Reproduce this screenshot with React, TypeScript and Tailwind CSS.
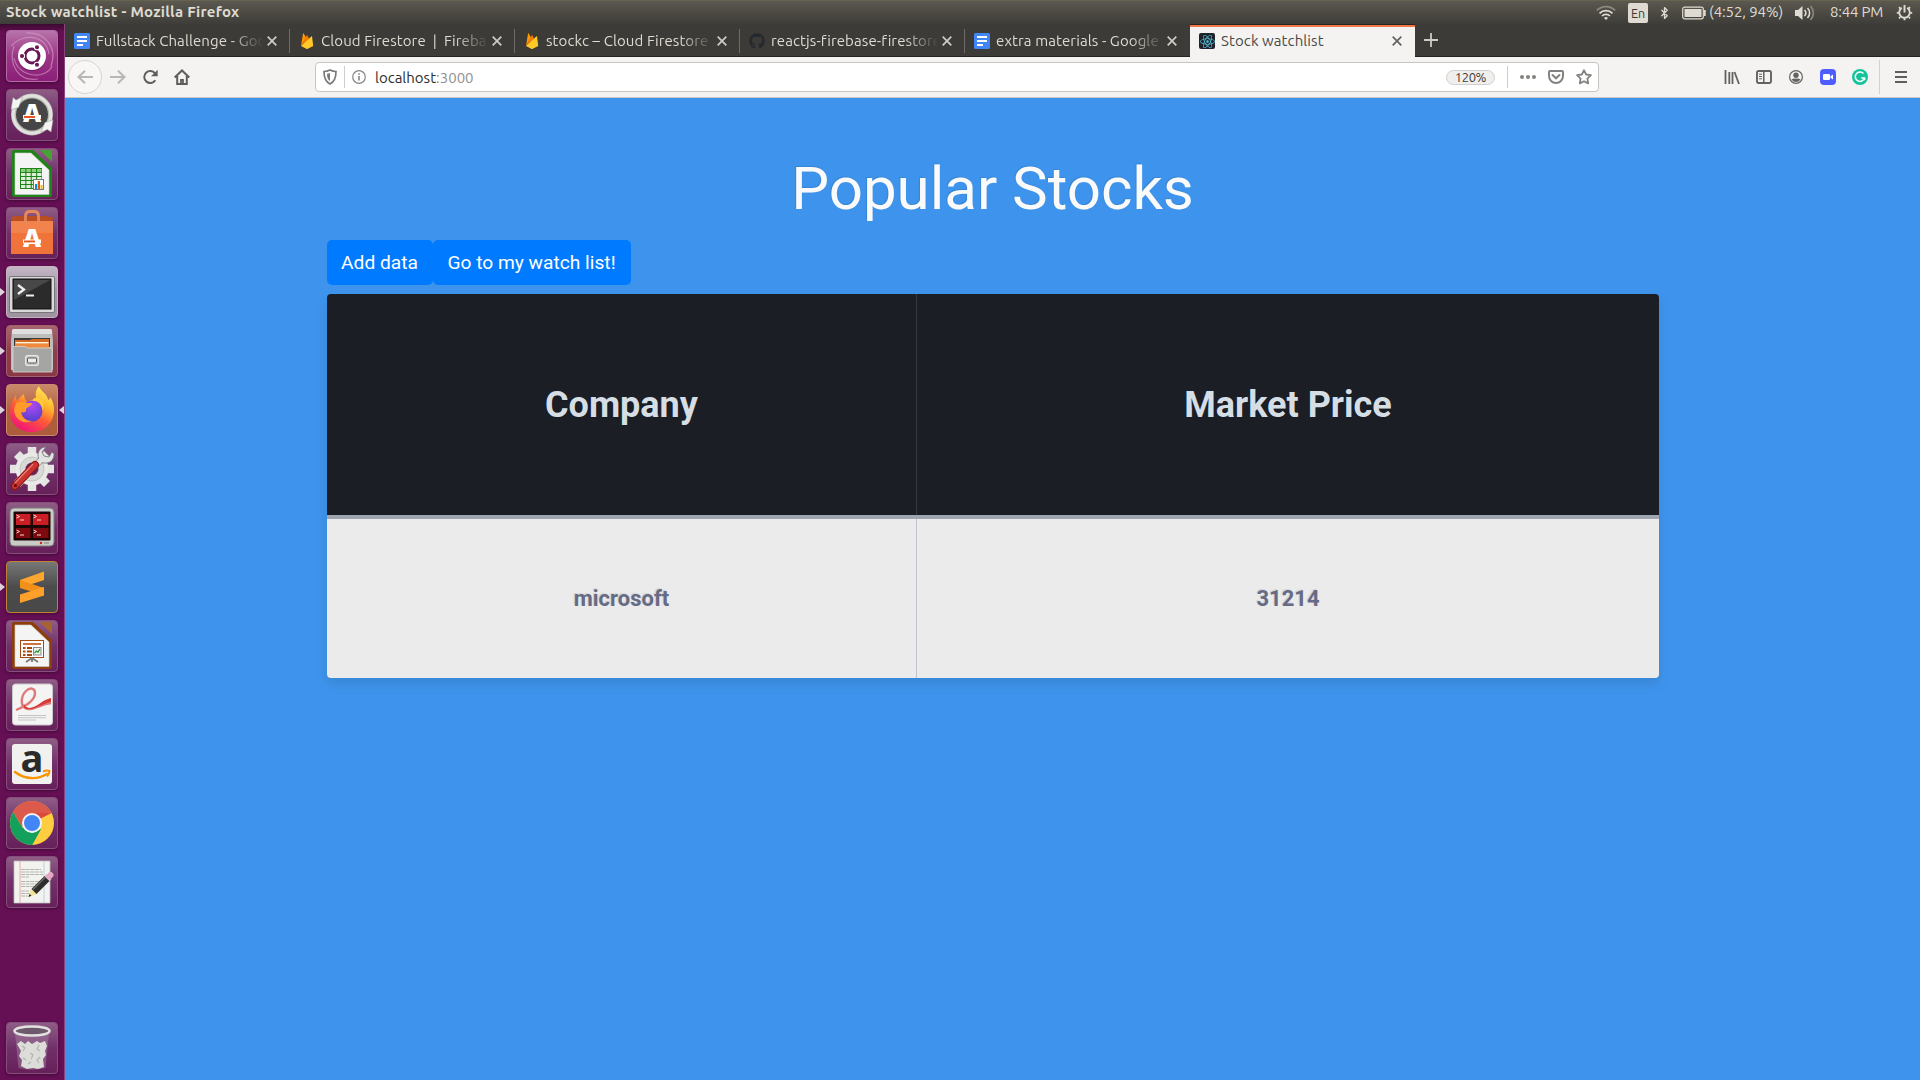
import React from "react";
import { FaGithub, FaReact } from "react-icons/fa";
import { Bluetooth } from "lucide-react";

const UI = "font-['Ubuntu','Noto_Sans',sans-serif]";

/* ---------- small glyphs ---------- */

function DocsIcon() {
  return (
    <svg width="16" height="16" viewBox="0 0 16 16">
      <rect width="16" height="16" rx="1.5" fill="#4285f4" />
      <path d="M3 4h10M3 8h10M3 12h6" stroke="#fff" strokeWidth="1.900" />
    </svg>
  );
}

function FirebaseIcon() {
  return (
    <svg width="16" height="16" viewBox="0 0 16 16">
      <path d="M2 13 4 .7c.1-.4.5-.5.7-.1L7 4.500 2 13Z" fill="#ff9800" />
      <path d="M2 13 7.700 2.600c.2-.4.6-.4.8 0L10 6 2 13Z" fill="#f57c00" />
      <path d="m2 13 10.300-9.500c.3-.3.7-.1.8.3L14.200 13 8.800 15.800c-.5.3-1 .3-1.500 0L2 13Z" fill="#ffca28" />
    </svg>
  );
}

function ReactTabIcon() {
  return (
    <span className="flex size-4 items-center justify-center rounded-[2px] bg-[#20232a] text-[#53c1de]">
      <FaReact size={15} />
    </span>
  );
}

function Close() {
  return (
    <svg width="10" height="10" viewBox="0 0 10 10" className="shrink-0">
      <path d="M.7.7 9.300 9.300M9.300.7.7 9.300" stroke="currentColor" strokeWidth="1.7" />
    </svg>
  );
}

/* ---------- top panel ---------- */

function TopPanel() {
  return (
    <header className="flex h-6 shrink-0 items-center border-t border-[#66644f] bg-linear-to-b from-[#5b584f] to-[#3e3d39] text-[#dfdbd2]">
      <span className="-mt-[2px] ml-[6px] text-[15px] leading-[22px] font-bold tracking-[0.27px] whitespace-nowrap">
        Stock watchlist - Mozilla Firefox
      </span>
      <div className="ml-auto flex h-[22px] items-center text-[15px] leading-[22px] whitespace-nowrap">
        <svg width="20" height="16" viewBox="0 0 20 16" fill="none" strokeWidth="1.700" className="mr-[12px]">
          <path d="M.8 5.500a13 13 0 0 1 18.400 0" stroke="#8b887f" />
          <path d="M3.500 8.300a9.200 9.200 0 0 1 13 0" stroke="#dfdbd2" />
          <path d="M6 11a5.700 5.700 0 0 1 8 0" stroke="#dfdbd2" />
          <path d="m8 12.900 2 2 2-2a3 3 0 0 0-4 0Z" fill="#dfdbd2" />
        </svg>
        <span className="mr-[10px] flex h-5 w-5 items-center justify-center rounded-[2px] bg-[#dfdbd2] text-[12.500px] text-[#3c3a35]">
          En
        </span>
        <Bluetooth width={13} height={18} strokeWidth={2.400} className="mr-[11px]" />
        <svg width="24" height="14" viewBox="0 0 24 14" className="mr-[3px]">
          <rect x=".7" y="1.200" width="20.600" height="11.600" rx="2" fill="none" stroke="#dfdbd2" strokeWidth="1.200" />
          <rect x="2.500" y="3" width="17" height="8" fill="#dfdbd2" />
          <path d="M22.800 4v6" stroke="#dfdbd2" strokeWidth="1.800" />
        </svg>
        <span className="-mt-[2px] w-[86px] tracking-[-0.1px]">(4:52, 94%)</span>
        <svg width="20" height="18" viewBox="0 0 20 18" fill="none" strokeWidth="1.600" className="mr-[15px]">
          <path d="M0 6h3l4.500-4v14L3 12H0Z" fill="#dfdbd2" />
          <path d="M9.500 6a4 4 0 0 1 0 6" stroke="#dfdbd2" />
          <path d="M12.500 4a7 7 0 0 1 0 10" stroke="#dfdbd2" />
          <path d="M15.500 2a10 10 0 0 1 0 14" stroke="#8b887f" />
        </svg>
        <span className="-mt-[2px] w-[66px] tracking-[-0.2px]">8:44 PM</span>
        <svg width="17" height="17" viewBox="0 0 17 17" fill="none" stroke="#dfdbd2" className="mr-[7px]">
          <path d="M5.800 3.900a5.300 5.300 0 1 0 5.400 0" strokeWidth="1.900" />
          <path d="M8.500 1v7.500" strokeWidth="1.900" />
          <path d="M.8 8.900h1.800M14.400 8.900h1.800M3 14.300l1.200-1.200M14 14.300l-1.200-1.200M8.500 14.300v2M3 3.200l1.200 1.200M14 3.200l-1.200 1.200" strokeWidth="1.900" />
        </svg>
      </div>
    </header>
  );
}

/* ---------- launcher ---------- */

type Tile = { name: string; bg: string; running?: boolean; active?: boolean; art: React.ReactNode };

const plain = "bg-linear-to-b from-[#8f5d86] via-[#70306a] to-[#672059] border-[#84507b]";

const Ubuntu = (
  <>
    <path d="M5 16C16 3 40 4 43 24M46 36C40 50 12 48 8 28M20 3C38 2 52 16 45 36M32 49C12 52 2 34 8 16" stroke="#d9a3cc" strokeWidth="1.200" fill="none" opacity=".6" />
    <circle cx="26" cy="27" r="14" fill="#5a0f47" opacity=".5" />
    <circle cx="26" cy="26" r="14" fill="#fff" />
    <circle cx="26" cy="26" r="7" fill="none" stroke="#6a1556" strokeWidth="3" />
    <g fill="#6a1556" stroke="#fff" strokeWidth="1.100">
      <circle cx="16" cy="26" r="2.600" />
      <circle cx="31" cy="17.200" r="2.600" />
      <circle cx="31" cy="34.800" r="2.600" />
    </g>
  </>
);

const Updater = (
  <>
    <circle cx="26" cy="25.500" r="18.500" fill="#464646" stroke="#b9b9b4" strokeWidth="5" />
    <circle cx="26" cy="25.500" r="18.800" fill="none" stroke="#e2e2de" strokeWidth="3" />
    <path d="M5 20.500 7 8.500l3 2.500 6.500-3-4 10.500Z" fill="#f4f4f2" stroke="#9b9b97" strokeWidth=".5" />
    <path d="m47 31-2 12-3.500-2.500L35 43l4-9.500Z" fill="#f4f4f2" stroke="#9b9b97" strokeWidth=".5" />
    <text x="26" y="33" textAnchor="middle" fontSize="25" fontWeight="800" fill="#fff" fontFamily="Open Sans, sans-serif">A</text>
    <path d="M17 26h18v3.800H17z" fill="#fff" />
    <path d="M18 27h11v2H18z" fill="#e95420" />
  </>
);

const Calc = (
  <>
    <path d="M8 2h19l19 18v27a2 2 0 0 1-2 2H8a2 2 0 0 1-2-2V4a2 2 0 0 1 2-2Z" fill="#1f8417" />
    <path d="M9 5h16l18 17v24.500H9Z" fill="#f4f4f4" stroke="#cfcfcf" strokeWidth=".6" />
    <path d="M34 2h10a2 2 0 0 1 2 2v10Z" fill="#43a52f" />
    <path d="M14 20h22v21H14Z" fill="#1f8417" />
    <g>
      {[21, 25, 29, 33, 37].map((y) =>
        [15, 20.4, 25.8, 31.2].map((x) => <rect key={`${x}-${y}`} x={x} y={y} width="4.300" height="3" fill={y === 21 ? "#8ccf7c" : "#dff0da"} />),
      )}
    </g>
    <rect x="27.500" y="31.500" width="10" height="10" fill="#fff" stroke="#777" />
    <path d="M29 36h2.200v5H29z" fill="#0f8fd0" />
    <path d="M31.800 33h2.200v8h-2.200z" fill="#e05d12" />
    <path d="M34.600 37h2v4h-2z" fill="#f1b713" />
  </>
);

const Software = (
  <>
    <path d="M6 14h40l1-4-4 0-2-1H10L5 10Z" fill="#b84f22" />
    <path d="M5 14h42v33H5Z" fill="#f0733a" />
    <path d="M5 14h42v12H5Z" fill="#f58d58" opacity=".6" />
    <path d="M19.500 17V9q0-4.500 4.500-4.500h4Q32.500 4.500 32.500 9v8" fill="none" stroke="#e8875c" strokeWidth="2.800" />
    <text x="26" y="40" textAnchor="middle" fontSize="25" fontWeight="800" fill="#fff" fontFamily="Open Sans, sans-serif">A</text>
    <path d="M17 32.500h18v3.800H17z" fill="#fff" />
    <path d="M18 33.500h11v1.900H18z" fill="#e95420" />
  </>
);

const Terminal = (
  <>
    <rect x="3.500" y="10.500" width="45" height="36" rx="1.500" fill="#d9d9d9" stroke="#777" />
    <rect x="7" y="13" width="38" height="30" fill="#2b2b2b" stroke="#111" />
    <path d="M8 14h36L8 34Z" fill="#484848" />
    <path d="m12 19 6 4.500-6 4.500" stroke="#eee" strokeWidth="2.300" fill="none" />
    <path d="M20 29.500h8" stroke="#eee" strokeWidth="2" />
  </>
);

const Files = (
  <>
    <path d="M6 5.500Q6 4 8 4h36q2 0 2 1.500L47 16v29H5V16Z" fill="#bdbdbd" />
    <path d="M6 5.500Q6 4 8 4h36q2 0 2 1.500V9H6Z" fill="#dfdfdf" />
    <path d="M8 13h36v9H8Z" fill="#3c3b37" />
    <path d="M9 15h15l2-1h17v8H9Z" fill="#d36a23" />
    <path d="M9.500 17h33v1.500h-33Z" fill="#fff3d8" />
    <path d="M9 19h34v4H9Z" fill="#ef8a3c" />
    <path d="M7 21.500h12l2 1.500h25v24H7Z" fill="#a5a5a3" stroke="#d6d6d6" strokeWidth=".8" />
    <rect x="19.500" y="30.500" width="13" height="10" rx="1.500" fill="#c8c8c8" stroke="#e8e8e8" />
    <rect x="21.500" y="33" width="9" height="5" rx="1" fill="#eee" stroke="#555" />
  </>
);

const Firefox = (
  <>
    <defs>
      <linearGradient id="ffBody" x1=".85" y1="0" x2=".3" y2="1">
        <stop offset="0" stopColor="#fff36a" />
        <stop offset=".35" stopColor="#ffb52c" />
        <stop offset=".62" stopColor="#ff5a36" />
        <stop offset="1" stopColor="#f0127d" />
      </linearGradient>
      <radialGradient id="ffGlobe" cx=".5" cy=".25" r=".8">
        <stop offset="0" stopColor="#b14af0" />
        <stop offset="1" stopColor="#4f3fd0" />
      </radialGradient>
    </defs>
    <path d="M33 2c1 4 5 6 7 9 1 2 2 3 2 5 1 0 2-1 2-3 3 4 4 8 4 13 0 13-10 22-22 22S4 40 4 28c0-7 3-12 6-17 0 2 0 4 1 6 2-3 4-5 7-7 0 3 1 6 3 8 3-2 7-2 9-4-1-5 0-9 3-12Z" fill="url(#ffBody)" />
    <circle cx="26" cy="27" r="10.500" fill="url(#ffGlobe)" />
    <path d="M10 19c4-2 8-1 11 0h5c0 3-5 4-6 6 1 3-2 4-5 3 1 6 5 9 11 9-10 4-18-3-18-12Z" fill="#ff9a2b" />
    <path d="M27 17c6-1 10 4 9 10 3-6 1-12-4-13-3-1-6 1-5 3Z" fill="#ffcb38" />
  </>
);

const Settings = (
  <>
    <g stroke="#e4e4e2" strokeWidth="8.500">
      <path d="M26 4v44M4 26h44M11 11l30 30M41 11 11 41" />
    </g>
    <circle cx="26" cy="26" r="16.500" fill="#e9e9e7" />
    <circle cx="26" cy="26" r="12" fill="#d9d9d6" stroke="#c4c4c2" />
    <circle cx="26" cy="26" r="6.500" fill="#6a2a60" />
    <path d="m28 24 9-9" stroke="#999c99" strokeWidth="6.500" />
    <path d="M40 4c-5 0-8 4-8 8 0 5 4 9 8 8 5 0 8-4 8-9l-2-2-3 5-5-1-2-4Z" fill="#e2e5e2" stroke="#7c7c7c" strokeWidth=".9" />
    <path d="m28 24 8-8" stroke="#e2e5e2" strokeWidth="4.600" />
    <path d="M9 43 29 22" stroke="#8d1310" strokeWidth="8" strokeLinecap="round" />
    <path d="M9 43 29 22" stroke="#c93430" strokeWidth="6" strokeLinecap="round" />
    <path d="M9 40 27 21" stroke="#ec7d76" strokeWidth="1.300" />
    <circle cx="9.500" cy="42.500" r="1.500" fill="#5c0c0a" />
  </>
);

const Terminator = (
  <>
    <rect x="4" y="6" width="44" height="38" rx="4" fill="#c9cbc6" stroke="#7d7d79" />
    <rect x="7.500" y="9.500" width="37" height="29" rx="1" fill="#1c0505" />
    <path d="M10 12h14.500v11H10zM27 12h15.500v11H27z" fill="#c81e24" />
    <path d="M10 26h14.500v10H10zM27 26h15.500v10H27z" fill="#7e0a0e" />
    <g stroke="#f6d0d0" strokeWidth="1" fill="none">
      <path d="m10.500 13 3 1.500-3 1.500M14 18h4M27.500 13l3 1.500-3 1.500M31 18h4M10.500 28l3 1.500-3 1.500M14 33h4M27.500 28l3 1.500-3 1.500M31 33h4" />
    </g>
    <circle cx="35" cy="41" r="1.200" fill="#d2221c" />
    <path d="M38 41h5" stroke="#a4a4a0" strokeWidth="2" />
  </>
);

const Sublime = (
  <>
    <path d="M14 19 38 10.500v8.500L14 27Z" fill="#ffa62e" />
    <path d="m14 19 24 8v7.500l-24-7.500Z" fill="#f39019" />
    <path d="M14 33.500 38 26v8.500L14 42Z" fill="#ffa02a" />
  </>
);

const Impress = (
  <>
    <path d="M8 2h19l19 18v27a2 2 0 0 1-2 2H8a2 2 0 0 1-2-2V4a2 2 0 0 1 2-2Z" fill="#8c3f0b" />
    <path d="M9 5h16l18 17v24.500H9Z" fill="#f4f4f4" stroke="#cfcfcf" strokeWidth=".6" />
    <path d="M34 2h10a2 2 0 0 1 2 2v10Z" fill="#a8632f" />
    <rect x="14.500" y="20.500" width="23" height="17" fill="#fff" stroke="#a34a12" />
    <path d="M17 24h18" stroke="#c9632a" strokeWidth="1.800" />
    <path d="M17 28h2.500M17 31.500h2.500M17 35h2.500M21 28h5M21 31.500h5M21 35h5" stroke="#a34a12" strokeWidth="1.900" />
    <rect x="27.500" y="27.500" width="7.500" height="7.500" fill="#eee" stroke="#888" />
    <path d="m28.500 33 2-2 1.500 1 2-3" stroke="#1f9a2b" strokeWidth="1.300" fill="none" />
    <path d="m20 42 6-4 6 4M26 38v4" stroke="#777" strokeWidth="1.800" fill="none" />
  </>
);

const Evince = (
  <>
    <rect x="6.500" y="5" width="40" height="41" rx="3" fill="#f4f4f4" stroke="#c9c9c9" />
    <path d="M10 31C20 27 29 21 29 14c0-5-5-6-9-2-5 5-7 16 2 18 6 1 13-5 23-6" fill="none" stroke="#e07a78" strokeWidth="2.400" />
    <path d="M22 30c7 1 13-5 23-7v-4c-9 2-14 9-20 10-3 .6-6-1-7-4-1 3 1 5 4 5Z" fill="#d83a38" />
    <path d="M12 36.500h28M12 38.700h28M12 41h18" stroke="#c4c4c4" strokeWidth="1" />
  </>
);

const Amazon = (
  <>
    <rect x="6" y="6" width="40" height="40" rx="3" fill="#f1f1ef" />
    <text x="26" y="33.500" textAnchor="middle" fontSize="38" fontWeight="700" fill="#2a2a2a" fontFamily="Open Sans, sans-serif">a</text>
    <path d="M9 34c10 7.500 22 8 32 2" fill="none" stroke="#f79400" strokeWidth="2.400" strokeLinecap="round" />
    <path d="M37 33.500q4-1.500 6.500-.5 0 3-2.500 5.500" fill="none" stroke="#f79400" strokeWidth="2" />
  </>
);

const Chrome = (
  <>
    <circle cx="26" cy="26" r="22" fill="#ffcd40" />
    <path d="M26 26 7 15A22 22 0 0 1 45.500 16Z" fill="#db4a3e" />
    <path d="M26 16h19.600A22 22 0 0 0 7 15l9 15Z" fill="#db5a4c" />
    <path d="M7 15a22 22 0 0 0 19 33l9-16-9 4-10-6Z" fill="#12a05c" />
    <path d="m26 48 9-16-6 4-5 11.500Z" fill="#12a05c" />
    <circle cx="26" cy="26" r="10" fill="#f4f4f4" />
    <circle cx="26" cy="26" r="8" fill="#4285f4" />
  </>
);

const Gedit = (
  <>
    <path d="M8 5h36v42H8Z" fill="#f2f2ee" stroke="#bbb" strokeWidth=".8" />
    <path d="M14 5v42" stroke="#e9a3a0" strokeWidth=".9" />
    <path d="M38 5v42" stroke="#b9cbe6" strokeWidth=".9" />
    <path d="M15 13.500h20M15 16h22M15 18.500h22M15 21h8M15 25.500h20M15 28h20M15 30.500h15M15 35h8M15 37.500h10M15 40h7" stroke="#b4b4b0" strokeWidth="1" strokeDasharray="4 .6" />
    <path d="m22.500 41 2.500-8 6 5Z" fill="#f2e394" />
    <path d="m22.500 41 1-3 2 1.800Z" fill="#222" />
    <path d="m28 35.500 13-13" stroke="#2d2d2d" strokeWidth="7" />
    <path d="m27 33.500 13-13" stroke="#6a6a6a" strokeWidth="1.500" />
    <path d="m41 22.500 2-2" stroke="#c8c8c8" strokeWidth="7" />
    <path d="m43 20.500 1.500-1.500" stroke="#e6a6c4" strokeWidth="6" strokeLinecap="round" />
  </>
);

const Trash = (
  <>
    <path d="M9 11h34l-3.500 35q-13.500 3.500-27 0Z" fill="#a98aa5" opacity=".45" />
    <path d="m11 22 4-3 4 3 3-3 4 3 5-3 3 2 5-2 2 5-2 5 1 4-3 4 1 8-6 2-5-1-6 1-6-3 1-6-3-4 2-5Z" fill="#dcdcd8" />
    <path d="m16 24 3 2-2 3M33 23l-2 4 3 2M24 31l3 2-2 4M17 36l3 2M34 35l-3 3 2 3M22 42l3-2" stroke="#b2b2ae" strokeWidth="1.100" fill="none" />
    <ellipse cx="26" cy="9" rx="17.500" ry="4.500" fill="#6f5a6d" stroke="#e2e2e0" strokeWidth="2.600" />
  </>
);

const TILES: Tile[] = [
  { name: "Dash", bg: "bg-linear-to-b from-[#b773aa] via-[#9b3587] to-[#8c1f78] border-[#b26ca5]", art: Ubuntu },
  { name: "Updater", bg: plain, art: Updater },
  { name: "Calc", bg: plain, art: Calc },
  { name: "Software", bg: plain, art: Software },
  { name: "Terminal", bg: "bg-linear-to-b from-[#c4b6c4] via-[#a396a4] to-[#a094a1] border-[#c2b4c1]", running: true, art: Terminal },
  { name: "Files", bg: "bg-linear-to-b from-[#a8666f] via-[#8d3f4b] to-[#8a3844] border-[#a5626b]", running: true, art: Files },
  { name: "Firefox", bg: "bg-linear-to-b from-[#c98a6a] via-[#b3603f] to-[#ad5b3c] border-[#cb8b6d]", running: true, active: true, art: Firefox },
  { name: "Settings", bg: plain, art: Settings },
  { name: "Terminator", bg: plain, art: Terminator },
  { name: "Sublime", bg: "bg-linear-to-b from-[#777] via-[#4c4c4c] to-[#484848] border-[#c08335]", running: true, art: Sublime },
  { name: "Impress", bg: plain, art: Impress },
  { name: "Documents", bg: plain, art: Evince },
  { name: "Amazon", bg: plain, art: Amazon },
  { name: "Chrome", bg: plain, art: Chrome },
  { name: "Text", bg: plain, art: Gedit },
];

function LauncherTile({ tile }: { tile: Tile }) {
  return (
    <div className="flex h-[52px] items-center">
      <span className="flex w-[6px] items-center">
        {tile.running && (
          <svg width="5" height="8" viewBox="0 0 5 8">
            <path d="M0 0v8l5-4Z" fill="#ddd3db" />
          </svg>
        )}
      </span>
      <span className={`block size-[52px] rounded-[4px] border shadow-[0_1px_3px_rgba(0,0,0,0.35)] ${tile.bg}`}>
        <svg width="52" height="52" viewBox="0 0 52 52" className="-m-px max-w-none overflow-visible">
          {tile.art}
        </svg>
      </span>
      {tile.active && (
        <svg width="5" height="8" viewBox="0 0 5 8" className="ml-px">
          <path d="M5 0v8L0 4Z" fill="#ddd3db" />
        </svg>
      )}
    </div>
  );
}

function Launcher() {
  return (
    <aside className="flex w-[65px] shrink-0 flex-col gap-[7px] border-r border-[#8a4580] bg-[#650f54] bg-[linear-gradient(to_bottom,#3b0a31,transparent_8px)] pt-[6px] pb-[6px]">
      {TILES.map((t) => (
        <LauncherTile key={t.name} tile={t} />
      ))}
      <div className="mt-auto">
        <LauncherTile tile={{ name: "Trash", bg: plain, art: Trash }} />
      </div>
    </aside>
  );
}

/* ---------- browser chrome ---------- */

const TABS = [
  { title: "Fullstack Challenge - Goo", icon: <DocsIcon /> },
  { title: "Cloud Firestore  |  Fireba", icon: <FirebaseIcon /> },
  { title: "stockc – Cloud Firestore", icon: <FirebaseIcon /> },
  { title: "reactjs-firebase-firestore", icon: <FaGithub size={16} className="text-[#24292e]" /> },
  { title: "extra materials - Google", icon: <DocsIcon /> },
];

function TabStrip() {
  return (
    <div className="flex h-[33px] shrink-0 border-b border-[#252422] bg-[#3c3b37] text-[15px] text-[#dfdbd2]">
      {TABS.map((t, i) => (
        <div key={t.title} className="flex h-8 w-[225px] items-center pt-px">
          <span className="ml-[9px] flex size-4 shrink-0 items-center">{t.icon}</span>
          <span className="mt-px ml-[6px] w-[166px] leading-[20px] tracking-[0.1px] whitespace-pre [mask-image:linear-gradient(to_right,#000_134px,transparent_168px)]">
            {t.title}
          </span>
          <span className="ml-[5px] flex text-[#cfccc4]">
            <Close />
          </span>
          <span className={`ml-auto h-6 w-px ${i === 4 ? "bg-transparent" : "bg-[#6d6c68]"}`} />
        </div>
      ))}
      <div className="flex h-[33px] w-[225px] items-center border-t border-[#252422] bg-[#f4f3f1] pr-[13px] text-[#4a4a48] shadow-[inset_0_2px_0_#f07746]">
        <span className="ml-[9px]">
          <ReactTabIcon />
        </span>
        <span className="ml-[6px] leading-[20px] tracking-[0.1px]">Stock watchlist</span>
        <span className="ml-auto flex text-[#62625f]">
          <Close />
        </span>
      </div>
      <svg width="14" height="14" viewBox="0 0 14 14" className="mt-[9px] ml-[9px]">
        <path d="M7 0v14M0 7h14" stroke="#cfccc4" strokeWidth="1.800" />
      </svg>
    </div>
  );
}

function Toolbar() {
  return (
    <div className="flex h-[41px] shrink-0 items-center border-b border-[#c9c7c3] bg-[#f4f3f1] text-[#63625f]">
      <span className="ml-[3px] flex size-[34px] items-center justify-center rounded-full border border-[#d6d4d1] bg-[#f8f7f6]">
        <svg width="16" height="14" viewBox="0 0 16 14" fill="none" stroke="#b9b7b4" strokeWidth="2">
          <path d="M16 7H1.500M8 .8 1.500 7 8 13.200" />
        </svg>
      </span>
      <svg width="16" height="14" viewBox="0 0 16 14" fill="none" stroke="#b9b7b4" strokeWidth="2" className="ml-[8px]">
        <path d="M0 7h14.500M8 .8 14.500 7 8 13.200" />
      </svg>
      <svg width="16" height="16" viewBox="0 0 16 16" fill="none" stroke="#5f5e5b" strokeWidth="2" className="ml-[16px]">
        <path d="M13.300 11.200A6 6 0 1 1 13 4.300" />
        <path d="M9 7.300h6.700V.8Z" fill="#5f5e5b" stroke="none" />
      </svg>
      <svg width="16" height="16" viewBox="0 0 16 16" fill="none" stroke="#5f5e5b" strokeWidth="2" className="ml-[16px]">
        <path d="m.7 8.500 7.300-7 7.300 7M3.200 7v8h9.600V7" />
        <path d="M7 15v-4h2v4" strokeWidth="1.800" />
      </svg>

      <div className="ml-[125px] flex h-[30px] w-[1284px] items-center rounded-[4px] border border-[#c8c5c1] bg-white">
        <svg width="14" height="16" viewBox="0 0 14 16" fill="none" className="ml-[7px]">
          <path d="M7 1c2 1 4 1.500 6 1.500 0 6-1 10-6 12.500C2 12.500 1 8.500 1 2.500 3 2.500 5 2 7 1Z" stroke="#7b7a78" strokeWidth="1.700" />
          <path d="M7 4c-1 .5-2 .7-3 .8 0 4 1 6 3 7.200Z" fill="#7b7a78" />
        </svg>
        <span className="ml-[7px] h-[22px] w-px bg-[#cfcdca]" />
        <svg width="14" height="14" viewBox="0 0 14 14" fill="none" stroke="#858482" className="ml-[7px]">
          <circle cx="7" cy="7" r="6.300" strokeWidth="1.200" />
          <path d="M7 6v4.500M7 3.200v1.600" strokeWidth="1.600" />
        </svg>
        <span className="mt-px ml-[9px] text-[15px] leading-[20px] text-[#2e2e2c]">
          localhost<span className="text-[#929190]">:3000</span>
        </span>
        <span className="ml-auto flex h-[15px] w-[49px] items-center justify-center rounded-full border border-[#d2d0cd] bg-[#f0efed] text-[13px] leading-none tracking-[-0.4px] text-[#3c3b37]">
          120%
        </span>
        <span className="ml-[12px] h-[22px] w-px bg-[#cfcdca]" />
        <svg width="16" height="4" viewBox="0 0 16 4" fill="#84827f" className="ml-[12px]">
          <circle cx="2" cy="2" r="2" />
          <circle cx="8" cy="2" r="2" />
          <circle cx="14" cy="2" r="2" />
        </svg>
        <svg width="16" height="14" viewBox="0 0 16 14" fill="none" stroke="#84827f" strokeWidth="2" className="ml-[12px]">
          <path d="M2 1h12q1 0 1 1v4a7 7 0 0 1-14 0V2q0-1 1-1Z" />
          <path d="m4.500 5 3.500 3.300L11.500 5" strokeLinecap="round" />
        </svg>
        <svg width="16" height="16" viewBox="0 0 16 16" fill="none" stroke="#84827f" strokeWidth="1.800" strokeLinejoin="round" className="mr-[6px] ml-[12px]">
          <path d="m8 1.200 2.100 4.300 4.800.7-3.500 3.400.8 4.800L8 12.200l-4.200 2.200.8-4.800L1.100 6.200l4.800-.7Z" />
        </svg>
      </div>

      <div className="ml-auto flex items-center">
        <svg width="16" height="14" viewBox="0 0 16 14" fill="none" stroke="#63625f" strokeWidth="2" className="mr-[16px]">
          <path d="M1.500 0v14M5.300 2v12M8.500 2v12" strokeWidth="1.800" />
          <path d="m10.500 2 4.500 12" strokeWidth="1.800" />
        </svg>
        <svg width="16" height="14" viewBox="0 0 16 14" fill="none" stroke="#63625f" strokeWidth="1.900" className="mr-[17px]">
          <rect x="1" y="1" width="14" height="12" rx="1.500" />
          <path d="M7.800 1v12" strokeWidth="1.500" />
          <path d="M3 4.200h3M3 6.500h3M3 8.800h3" strokeWidth="1" />
        </svg>
        <svg width="14" height="14" viewBox="0 0 14 14" className="mr-[17px]">
          <circle cx="7" cy="7" r="6.400" fill="none" stroke="#63625f" strokeWidth="1.200" />
          <circle cx="7" cy="5.200" r="2.700" fill="#63625f" />
          <path d="M2.500 9.500Q4.500 8.200 7 8.800q2.500-.6 4.500.7-2 2.500-4.500 2.500t-4.500-2.500Z" fill="#63625f" />
        </svg>
        <svg width="16" height="16" viewBox="0 0 16 16" className="mr-[16px]">
          <rect width="16" height="16" rx="4" fill="#4f5dff" />
          <rect x="3" y="5" width="7" height="6" rx="1.300" fill="#fff" />
          <path d="m10.500 7.300 2.500-1.800v5l-2.500-1.800Z" fill="#fff" />
        </svg>
        <svg width="16" height="16" viewBox="0 0 16 16" className="mr-[11px]">
          <circle cx="8" cy="8" r="8" fill="#15c39a" />
          <path d="M11.500 4.600A4.700 4.700 0 1 0 12.500 9H9.300M12.600 8.200v3" fill="none" stroke="#fff" strokeWidth="1.500" />
        </svg>
        <span className="h-[34px] w-px bg-[#d3d1ce]" />
        <svg width="12" height="12" viewBox="0 0 12 12" stroke="#5f5e5b" strokeWidth="2" className="mr-[13px] ml-[15px]">
          <path d="M0 1h12M0 6h12M0 11h12" />
        </svg>
      </div>
    </div>
  );
}

/* ---------- page ---------- */

const ROWS = [{ company: "microsoft", price: "31214" }];

function StocksPage() {
  return (
    <main className="flex-1 bg-[#3e94ec] font-['Roboto',sans-serif]">
      <div className="mx-auto w-[1332px] pt-[55px]">
        <h1 className="h-[87px] text-center text-[60px] leading-[72px] font-normal text-[#fafafa] [text-shadow:-1px_-1px_1px_rgba(0,0,0,0.1)]">
          Popular Stocks
        </h1>
        <div className="flex text-[19.200px] leading-[27px] whitespace-nowrap text-white">
          <button className="h-[45px] w-[106px] rounded-[5px] bg-[#007bff]">Add data</button>
          <button className="h-[45px] w-[198px] rounded-[5px] bg-[#007bff]">Go to my watch list!</button>
        </div>
        <div className="mt-[9px] overflow-hidden rounded-[4px] shadow-[0_6px_12px_rgba(0,0,0,0.1)]">
          <div className="grid h-[225px] grid-cols-[590px_1fr] border-b-4 border-[#9ea7af] bg-[#1b1e24] text-[36px] font-bold text-[#d5dde5] [text-shadow:0_1px_1px_rgba(0,0,0,0.1)]">
            <div className="flex items-center justify-center border-r border-[#343a45] pl-px">Company</div>
            <div className="flex items-center justify-center pl-px">Market Price</div>
          </div>
          {ROWS.map((r) => (
            <div
              key={r.company}
              className="grid h-[159px] grid-cols-[590px_1fr] bg-[#ebebeb] text-[22px] font-bold text-[#666b85] [text-shadow:-1px_-1px_1px_rgba(0,0,0,0.1)]"
            >
              <div className="flex items-center justify-center border-r border-[#c1c3d1] pl-px">{r.company}</div>
              <div className="flex items-center justify-center pl-px">{r.price}</div>
            </div>
          ))}
        </div>
      </div>
    </main>
  );
}

export default function App() {
  return (
    <div className={`flex h-[1080px] w-[1920px] flex-col overflow-hidden ${UI}`}>
      <TopPanel />
      <div className="flex min-h-0 flex-1">
        <Launcher />
        <div className="flex min-w-0 flex-1 flex-col">
          <TabStrip />
          <Toolbar />
          <StocksPage />
        </div>
      </div>
    </div>
  );
}
